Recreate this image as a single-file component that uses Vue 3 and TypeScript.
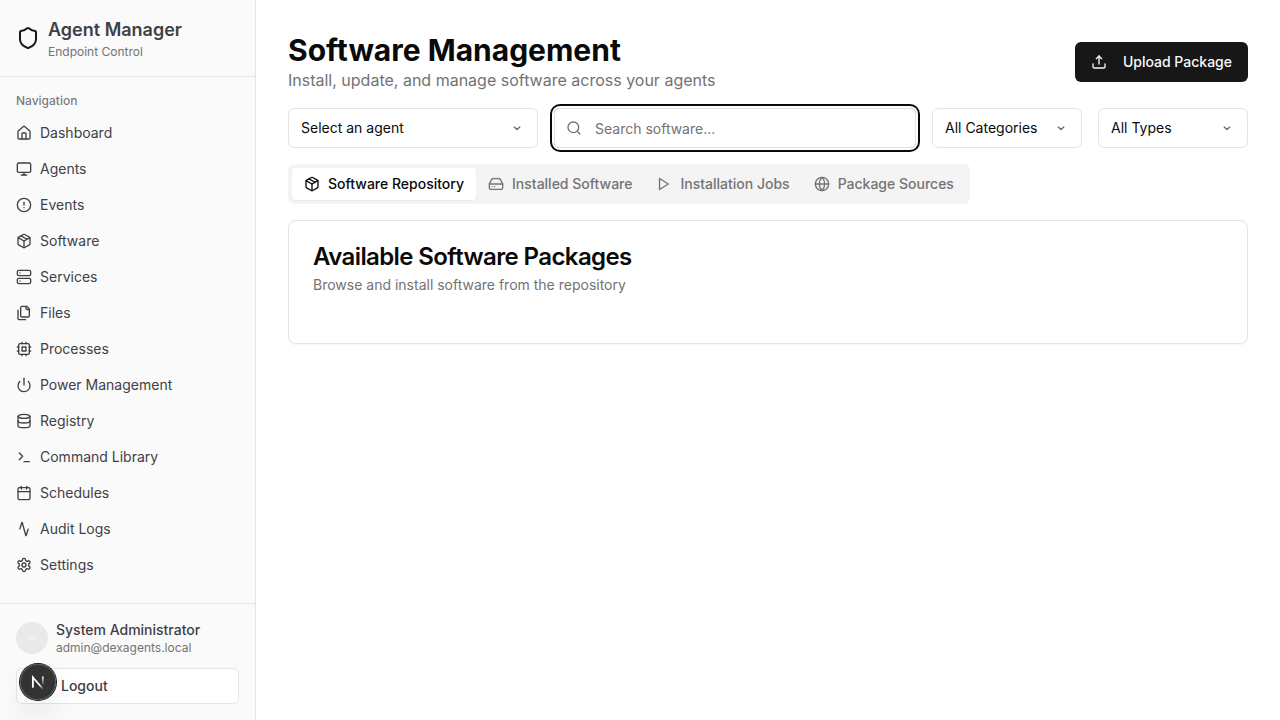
<script setup lang="ts">
import { ref } from 'vue'

type IconName = string

const icons: Record<IconName, string[]> = {
  shield: ['M20 13c0 5-3.5 7.5-7.66 8.95a1 1 0 0 1-.67-.01C7.5 20.5 4 18 4 13V6a1 1 0 0 1 1-1c2 0 4.5-1.2 6.24-2.72a1.17 1.17 0 0 1 1.52 0C14.51 3.81 17 5 19 5a1 1 0 0 1 1 1z'],
  house: [
    'M15 21v-8a1 1 0 0 0-1-1h-4a1 1 0 0 0-1 1v8',
    'M3 10a2 2 0 0 1 .709-1.528l7-5.999a2 2 0 0 1 2.582 0l7 5.999A2 2 0 0 1 21 10v9a2 2 0 0 1-2 2H5a2 2 0 0 1-2-2z',
  ],
  monitor: ['M4 3h16a2 2 0 0 1 2 2v10a2 2 0 0 1-2 2H4a2 2 0 0 1-2-2V5a2 2 0 0 1 2-2z', 'M8 21h8', 'M12 17v4'],
  alert: ['M12 2a10 10 0 1 0 0 20a10 10 0 1 0 0-20z', 'M12 8v4', 'M12 16h.01'],
  package: [
    'M11 21.73a2 2 0 0 0 2 0l7-4A2 2 0 0 0 21 16V8a2 2 0 0 0-1-1.73l-7-4a2 2 0 0 0-2 0l-7 4A2 2 0 0 0 3 8v8a2 2 0 0 0 1 1.73z',
    'M12 22V12',
    'M3.29 7 12 12l8.71-5',
    'm7.5 4.27 9 5.15',
  ],
  server: [
    'M4 2h16a2 2 0 0 1 2 2v4a2 2 0 0 1-2 2H4a2 2 0 0 1-2-2V4a2 2 0 0 1 2-2z',
    'M4 14h16a2 2 0 0 1 2 2v4a2 2 0 0 1-2 2H4a2 2 0 0 1-2-2v-4a2 2 0 0 1 2-2z',
    'M6 6h.01',
    'M6 18h.01',
  ],
  files: [
    'M20 7h-3a2 2 0 0 1-2-2V2',
    'M9 18a2 2 0 0 1-2-2V4a2 2 0 0 1 2-2h7l4 4v10a2 2 0 0 1-2 2Z',
    'M3 7.6v12.8A1.6 1.6 0 0 0 4.6 22h9.8',
  ],
  cpu: [
    'M6 4h12a2 2 0 0 1 2 2v12a2 2 0 0 1-2 2H6a2 2 0 0 1-2-2V6a2 2 0 0 1 2-2z',
    'M9 9h6v6H9z',
    'M15 2v2M15 20v2M2 15h2M2 9h2M20 15h2M20 9h2M9 2v2M9 20v2',
  ],
  power: ['M12 2v10', 'M18.4 6.6a9 9 0 1 1-12.77.04'],
  database: ['M3 5a9 3 0 1 0 18 0a9 3 0 1 0-18 0', 'M3 5v14a9 3 0 0 0 18 0V5', 'M3 12a9 3 0 0 0 18 0'],
  terminal: ['m5 16 5-5-5-5', 'M12 19h8'],
  calendar: ['M8 2v4', 'M16 2v4', 'M5 4h14a2 2 0 0 1 2 2v14a2 2 0 0 1-2 2H5a2 2 0 0 1-2-2V6a2 2 0 0 1 2-2z', 'M3 10h18'],
  activity: ['m18.2 12.2-2.96 9.62a.25.25 0 0 1-.48 0L9.24 2.18a.25.25 0 0 0-.48 0L5.8 11.8'],
  settings: [
    'M12.22 2h-.44a2 2 0 0 0-2 2v.18a2 2 0 0 1-1 1.73l-.43.25a2 2 0 0 1-2 0l-.15-.08a2 2 0 0 0-2.73.73l-.22.38a2 2 0 0 0 .73 2.73l.15.1a2 2 0 0 1 1 1.72v.51a2 2 0 0 1-1 1.74l-.15.09a2 2 0 0 0-.73 2.73l.22.38a2 2 0 0 0 2.73.73l.15-.08a2 2 0 0 1 2 0l.43.25a2 2 0 0 1 1 1.73V20a2 2 0 0 0 2 2h.44a2 2 0 0 0 2-2v-.18a2 2 0 0 1 1-1.73l.43-.25a2 2 0 0 1 2 0l.15.08a2 2 0 0 0 2.73-.73l.22-.39a2 2 0 0 0-.73-2.73l-.15-.08a2 2 0 0 1-1-1.74v-.5a2 2 0 0 1 1-1.74l.15-.09a2 2 0 0 0 .73-2.73l-.22-.38a2 2 0 0 0-2.73-.73l-.15.08a2 2 0 0 1-2 0l-.43-.25a2 2 0 0 1-1-1.73V4a2 2 0 0 0-2-2z',
    'M12 9a3 3 0 1 0 0 6a3 3 0 1 0 0-6z',
  ],
  drive: [
    'M22 12H2',
    'M5.45 5.11 2 12v6a2 2 0 0 0 2 2h16a2 2 0 0 0 2-2v-6l-3.45-6.89A2 2 0 0 0 16.76 4H7.24a2 2 0 0 0-1.79 1.11z',
    'M6 16h.01',
    'M10 16h.01',
  ],
  play: ['M5.3 3.8l13.2 8.2-13.2 8.2z'],
  globe: ['M12 2a10 10 0 1 0 0 20a10 10 0 1 0 0-20z', 'M12 2a14.5 14.5 0 0 0 0 20 14.5 14.5 0 0 0 0-20', 'M2 12h20'],
  upload: ['M12 3v12', 'm16 7-4-4-4 4', 'M21 15v4a2 2 0 0 1-2 2H5a2 2 0 0 1-2-2v-4'],
  search: ['M11 3a8 8 0 1 0 0 16a8 8 0 1 0 0-16z', 'm21 21-4.3-4.3'],
  chevron: ['m7.8 10.5 4.2 3.8 4.2-3.8'],
}

const navItems: { label: string; icon: IconName }[] = [
  { label: 'Dashboard', icon: 'house' },
  { label: 'Agents', icon: 'monitor' },
  { label: 'Events', icon: 'alert' },
  { label: 'Software', icon: 'package' },
  { label: 'Services', icon: 'server' },
  { label: 'Files', icon: 'files' },
  { label: 'Processes', icon: 'cpu' },
  { label: 'Power Management', icon: 'power' },
  { label: 'Registry', icon: 'database' },
  { label: 'Command Library', icon: 'terminal' },
  { label: 'Schedules', icon: 'calendar' },
  { label: 'Audit Logs', icon: 'activity' },
  { label: 'Settings', icon: 'settings' },
]

const tabs: { label: string; icon: IconName }[] = [
  { label: 'Software Repository', icon: 'package' },
  { label: 'Installed Software', icon: 'drive' },
  { label: 'Installation Jobs', icon: 'play' },
  { label: 'Package Sources', icon: 'globe' },
]

const activeTab = ref(0)
const query = ref('')
</script>

<template>
  <div class="layout">
    <aside class="sidebar">
      <header class="brand">
        <svg class="icon brand-icon" viewBox="0 0 24 24"><path v-for="d in icons.shield" :key="d" :d="d" /></svg>
        <div>
          <div class="brand-name">Agent Manager</div>
          <div class="brand-sub">Endpoint Control</div>
        </div>
      </header>
      <nav class="nav">
        <div class="nav-label">Navigation</div>
        <ul class="nav-list">
          <li v-for="item in navItems" :key="item.label">
            <a class="nav-item">
              <svg class="icon" viewBox="0 0 24 24"><path v-for="d in icons[item.icon]" :key="d" :d="d" /></svg>
              <span>{{ item.label }}</span>
            </a>
          </li>
        </ul>
      </nav>
      <footer class="account">
        <div class="user">
          <span class="avatar"></span>
          <div>
            <div class="user-name">System Administrator</div>
            <div class="user-mail">admin@dexagents.local</div>
          </div>
        </div>
        <button class="logout">Logout</button>
      </footer>
    </aside>

    <main class="main">
      <div class="page-head">
        <div>
          <h1>Software Management</h1>
          <p>Install, update, and manage software across your agents</p>
        </div>
        <button class="upload">
          <svg class="icon" viewBox="0 0 24 24"><path v-for="d in icons.upload" :key="d" :d="d" /></svg>
          <span>Upload Package</span>
        </button>
      </div>

      <div class="filters">
        <button class="select agent">
          <span>Select an agent</span>
          <svg class="icon chevron" viewBox="0 0 24 24"><path v-for="d in icons.chevron" :key="d" :d="d" /></svg>
        </button>
        <label class="search">
          <svg class="icon" viewBox="0 0 24 24"><path v-for="d in icons.search" :key="d" :d="d" /></svg>
          <input v-model="query" placeholder="Search software..." />
        </label>
        <button class="select">
          <span>All Categories</span>
          <svg class="icon chevron" viewBox="0 0 24 24"><path v-for="d in icons.chevron" :key="d" :d="d" /></svg>
        </button>
        <button class="select">
          <span>All Types</span>
          <svg class="icon chevron" viewBox="0 0 24 24"><path v-for="d in icons.chevron" :key="d" :d="d" /></svg>
        </button>
      </div>

      <div class="tabs">
        <button
          v-for="(tab, i) in tabs"
          :key="tab.label"
          class="tab"
          :class="{ active: i === activeTab }"
          @click="activeTab = i"
        >
          <svg class="icon" viewBox="0 0 24 24"><path v-for="d in icons[tab.icon]" :key="d" :d="d" /></svg>
          <span>{{ tab.label }}</span>
        </button>
      </div>

      <section class="card">
        <h2>Available Software Packages</h2>
        <p>Browse and install software from the repository</p>
      </section>
    </main>

    <div class="dev-badge">
      <svg viewBox="0 0 40 40">
        <defs>
          <linearGradient id="fade-diagonal" x1="20" y1="20" x2="26.5" y2="28" gradientUnits="userSpaceOnUse">
            <stop offset="0.35" stop-color="#fff" />
            <stop offset="1" stop-color="#fff" stop-opacity="0" />
          </linearGradient>
          <linearGradient id="fade-stem" x1="25" y1="14" x2="25" y2="24" gradientUnits="userSpaceOnUse">
            <stop stop-color="#fff" />
            <stop offset="1" stop-color="#fff" stop-opacity="0" />
          </linearGradient>
        </defs>
        <path d="M14.2 26V14.7L25.8 28" stroke="url(#fade-diagonal)" />
        <path d="M14.2 26V14.2" stroke="#fff" />
        <path d="M25.4 14V25" stroke="url(#fade-stem)" />
      </svg>
    </div>
  </div>
</template>

<style>
body {
  margin: 0;
  background: #fff;
}
</style>

<style scoped>
.layout,
.layout * {
  box-sizing: border-box;
}
.layout {
  display: flex;
  height: 100vh;
  overflow: hidden;
  background: #fff;
  color: #0a0a0a;
  font-family: Inter, "Liberation Sans", sans-serif;
  font-size: 14px;
  line-height: 20px;
}
h1,
h2,
p,
ul {
  margin: 0;
  padding: 0;
}
button,
input {
  font: inherit;
  color: inherit;
  margin: 0;
}
.icon {
  width: 16px;
  height: 16px;
  flex: none;
  fill: none;
  stroke: currentColor;
  stroke-width: 2;
  stroke-linecap: round;
  stroke-linejoin: round;
}

.sidebar {
  width: 256px;
  flex: none;
  display: flex;
  flex-direction: column;
  background: #fafafa;
  border-right: 1px solid #e5e5e5;
  color: #3f3f46;
}
.brand {
  display: flex;
  align-items: center;
  gap: 8px;
  padding: 16px;
  border-bottom: 1px solid #e5e5e5;
}
.brand-icon {
  width: 24px;
  height: 24px;
  color: #171717;
}
.brand-name {
  font-size: 18px;
  line-height: 28px;
  font-weight: 600;
}
.brand-sub,
.user-mail {
  font-size: 12px;
  line-height: 16px;
  color: #737373;
}
.nav {
  flex: 1;
  padding: 8px;
}
.nav-label {
  display: flex;
  align-items: center;
  height: 32px;
  padding: 0 8px;
  font-size: 12px;
  font-weight: 500;
  color: rgba(63, 63, 70, 0.7);
}
.nav-list {
  list-style: none;
  display: flex;
  flex-direction: column;
  gap: 4px;
}
.nav-item {
  display: flex;
  align-items: center;
  gap: 8px;
  height: 32px;
  padding: 0 8px;
}
.account {
  display: flex;
  flex-direction: column;
  gap: 12px;
  padding: 16px;
  border-top: 1px solid #e5e5e5;
}
.user {
  display: flex;
  align-items: center;
  gap: 8px;
}
.avatar {
  width: 32px;
  height: 32px;
  border-radius: 50%;
  background: radial-gradient(circle, #eeeeee 0, #eeeeee 2px, #e9e9e9 5px);
}
.user-name {
  font-weight: 500;
}
.logout {
  height: 36px;
  padding: 0 0 0 44px;
  text-align: left;
  font-weight: 500;
  background: #fff;
  border: 1px solid #e5e5e5;
  border-radius: 6px;
}

.main {
  flex: 1;
  min-width: 0;
  display: flex;
  flex-direction: column;
  gap: 16px;
  padding: 32px;
}
.page-head {
  display: flex;
  align-items: center;
  justify-content: space-between;
}
h1 {
  font-size: 30px;
  line-height: 36px;
  font-weight: 700;
}
.page-head p {
  font-size: 16px;
  line-height: 24px;
  color: #737373;
}
.upload {
  display: flex;
  align-items: center;
  gap: 16px;
  height: 40px;
  padding: 0 16px;
  border: 0;
  border-radius: 6px;
  background: #171717;
  color: #fafafa;
  font-weight: 500;
}
.filters {
  display: flex;
  gap: 16px;
}
.select {
  display: flex;
  align-items: center;
  justify-content: space-between;
  width: 150px;
  height: 40px;
  padding: 0 12px;
  background: #fff;
  border: 1px solid #e5e5e5;
  border-radius: 6px;
}
.agent {
  width: 250px;
}
.chevron {
  opacity: 0.6;
}
.search {
  flex: 1;
  display: flex;
  align-items: center;
  gap: 13px;
  height: 40px;
  padding: 0 12px 0 11px;
  border: 1px solid #e5e5e5;
  border-radius: 6px;
  color: #737373;
  box-shadow: 0 0 0 2px #fff, 0 0 0 4px #0a0a0a;
}
.search input {
  flex: 1;
  min-width: 0;
  padding: 2px 0 0;
  border: 0;
  outline: 0;
  background: transparent;
}
.search input::placeholder {
  color: #737373;
  opacity: 1;
}
.tabs {
  align-self: flex-start;
  display: flex;
  height: 40px;
  padding: 4px;
  border-radius: 6px;
  background: #f4f4f4;
  color: #737373;
}
.tab {
  display: flex;
  align-items: center;
  gap: 8px;
  padding: 0 12px;
  border: 0;
  border-radius: 4px;
  background: transparent;
  font-weight: 500;
}
.tab.active {
  background: #fff;
  color: #0a0a0a;
  box-shadow: 0 1px 2px rgba(0, 0, 0, 0.05);
}
.card {
  height: 124px;
  padding: 24px;
  border: 1px solid #e5e5e5;
  border-radius: 8px;
  box-shadow: 0 1px 2px rgba(0, 0, 0, 0.05);
}
h2 {
  font-size: 24px;
  line-height: 24px;
  font-weight: 600;
  letter-spacing: -0.025em;
}
.card p {
  margin-top: 6px;
  color: #737373;
}

/* Floating developer tools button over the page corner */
.dev-badge {
  position: absolute;
  left: 20px;
  bottom: 20px;
  width: 36px;
  height: 36px;
  border-radius: 50%;
  background: rgba(0, 0, 0, 0.8);
  box-shadow: 0 0 0 1px #171717, inset 0 0 0 1px rgba(255, 255, 255, 0.14), 0 16px 32px -8px rgba(0, 0, 0, 0.24);
}
.dev-badge svg {
  display: block;
  width: 36px;
  height: 36px;
  fill: none;
  stroke-width: 1.8;
}
</style>
